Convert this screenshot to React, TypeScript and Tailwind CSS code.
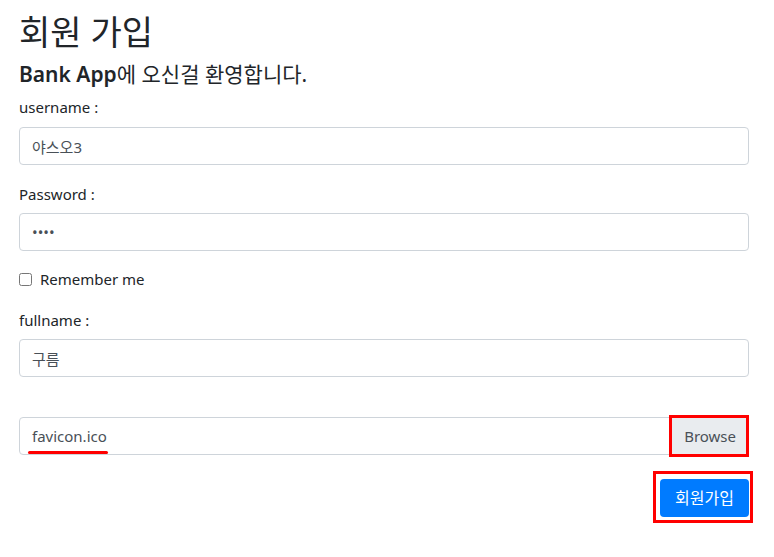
import React from 'react';

const font = { fontFamily: '"Noto Sans", "Noto Sans CJK KR", sans-serif' };

const inputCls =
  'block w-full h-[38px] px-3 border border-[#ced4da] rounded-[4px] bg-white text-[15px] text-[#495057] outline-none';

export default function App() {
  return (
    <div className="min-h-[557px] bg-white text-[#212529]" style={font}>
      <div className="px-[19px] pt-[12px] w-[768px]">
        <h1 className="text-[34px] leading-[40px] font-normal">회원 가입</h1>
        <h4 className="mt-[10px] text-[21px] leading-[25px]">
          <b className="font-semibold">Bank App</b>에 오신걸 환영합니다.
        </h4>

        <form className="mt-[9px]">
          <label className="block text-[15px] leading-[22px] mb-[9px]">username :</label>
          <input className={inputCls} defaultValue="야스오3" />

          <label className="block text-[15px] leading-[22px] mt-[18px] mb-[8px]">Password :</label>
          <input className={inputCls} type="password" defaultValue="1234" />

          <label className="flex items-center gap-[8px] mt-[17px] text-[15px] leading-[22px]">
            <input type="checkbox" className="w-[13px] h-[13px] m-0" />
            Remember me
          </label>

          <label className="block text-[15px] leading-[22px] mt-[19px] mb-[8px]">fullname :</label>
          <input className={inputCls} defaultValue="구름" />

          <div className="relative mt-[40px] flex h-[38px] border border-[#ced4da] rounded-[4px] bg-white text-[15px] text-[#495057]">
            <span className="flex-1 flex items-center px-3">favicon.ico</span>
            <span className="flex items-center px-3 bg-[#e9ecef] border-l border-[#ced4da] rounded-r-[3px]">Browse</span>
            <div className="absolute left-[8px] top-[33px] w-[80px] h-[3px] bg-[#ff0000] rounded-full" />
            <div className="absolute right-[-1px] top-[-3px] w-[80px] h-[42px] border-[3px] border-[#ff0000]" />
          </div>

          <div className="mt-[24px] flex justify-end">
            <div className="relative">
              <button
                type="button"
                className="h-[38px] px-[15px] rounded-[4px] bg-[#007bff] text-white text-[16px]"
              >
                회원가입
              </button>
              <div className="absolute left-[-7px] top-[-8px] right-[-4px] bottom-[-6px] border-[3px] border-[#ff0000] pointer-events-none" />
            </div>
          </div>
        </form>
      </div>
    </div>
  );
}
